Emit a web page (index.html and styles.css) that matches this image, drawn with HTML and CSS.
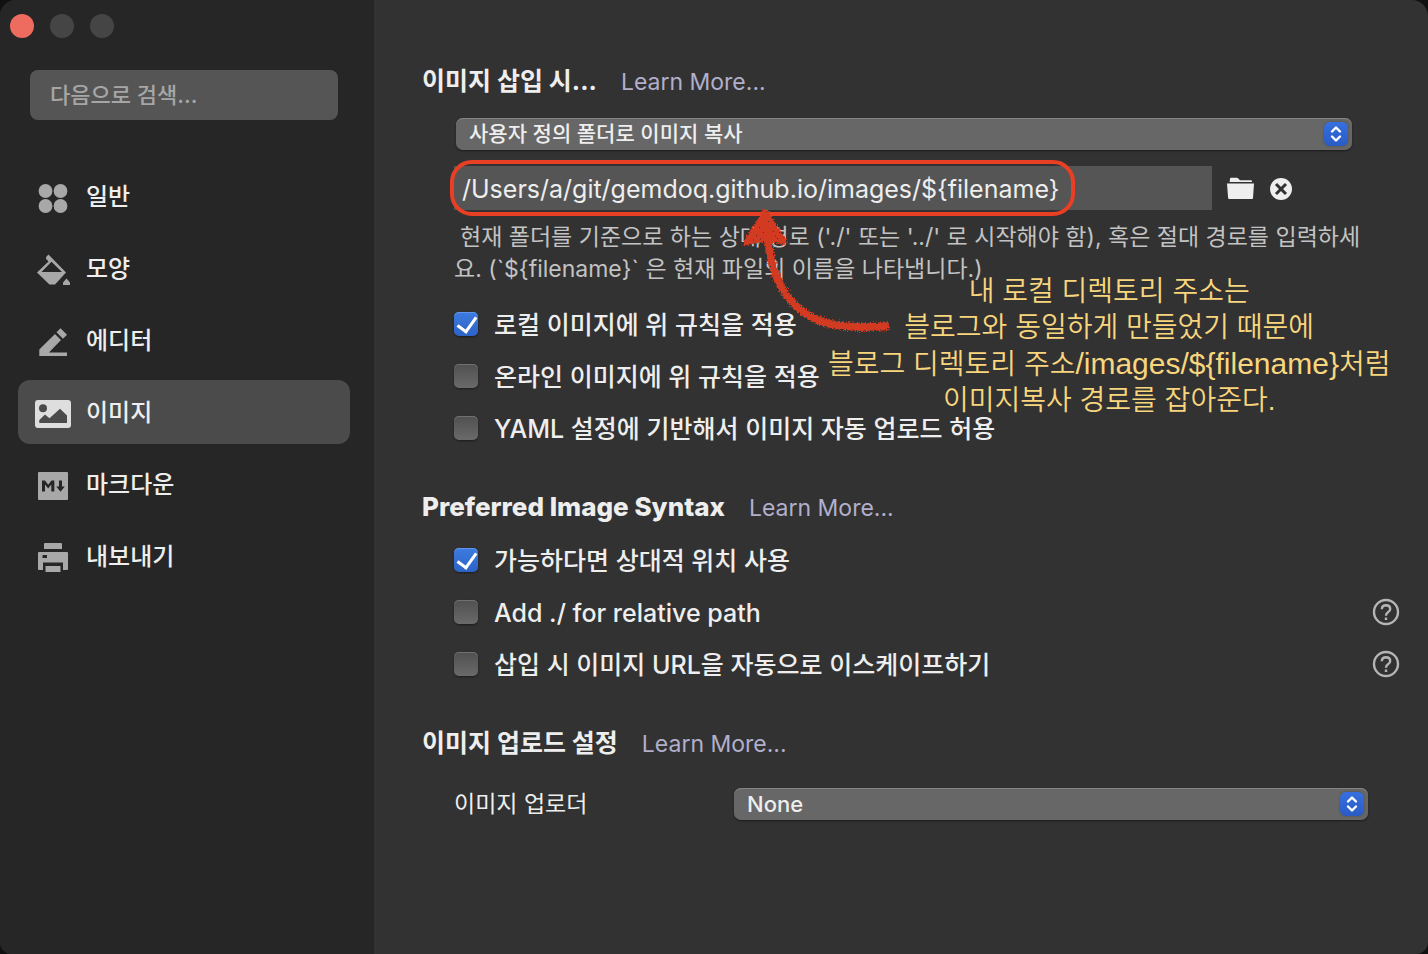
FILE: index.html
```html
<!DOCTYPE html>
<html lang="ko">
<head>
<meta charset="utf-8">
<title>이미지</title>
<link rel="stylesheet" href="styles.css">
</head>
<body>
<div class="window">
  <aside class="sidebar">
    <div class="lights">
      <button class="light light-close" aria-label="닫기"></button>
      <button class="light" aria-label="최소화"></button>
      <button class="light" aria-label="확대"></button>
    </div>
    <input class="search" type="search" placeholder="다음으로 검색..." aria-label="다음으로 검색">
    <nav class="nav">
      <a class="nav-item" href="#general">
        <svg class="nav-icon" viewBox="0 0 36 36"><circle cx="10.500" cy="11" r="6.900"/><circle cx="25.500" cy="11" r="6.900"/><circle cx="10.500" cy="26" r="6.900"/><circle cx="25.500" cy="26" r="6.900"/></svg>
        <span>일반</span>
      </a>
      <a class="nav-item" href="#appearance">
        <svg class="nav-icon" viewBox="0 0 36 36"><path fill-rule="evenodd" d="M11.500 4.500 13.500 2.500 31 20.500 20 32.500H14.500L2 20.500 13.500 9.500 10.800 6.500ZM15.500 10.800 6.500 20H27L16.500 9.800Z"/><path d="M31.500 26.500 35 30.500V33H28V30.500Z"/></svg>
        <span>모양</span>
      </a>
      <a class="nav-item" href="#editor">
        <svg class="nav-icon" viewBox="0 0 36 36"><path d="M25.500 4.200 32 10.700 28 14.800 21.500 8.300ZM20 10 26 16 14 28.500H32V32H4.300V25.500Z"/></svg>
        <span>에디터</span>
      </a>
      <a class="nav-item nav-item-active" href="#image" aria-current="page">
        <svg class="nav-icon" viewBox="0 0 36 36"><path fill-rule="evenodd" d="M3 4H33Q36 4 36 7V29Q36 32 33 32H3Q0 32 0 29V7Q0 4 3 4ZM8 8.200A4 4 0 1 0 8 16.200A4 4 0 1 0 8 8.200ZM4.300 27H32V19.500L25 12.800 14.500 22.300 10 18.500 4.300 24Z"/></svg>
        <span>이미지</span>
      </a>
      <a class="nav-item" href="#markdown">
        <svg class="nav-icon" viewBox="0 0 36 36"><path fill-rule="evenodd" d="M4 4H32Q33 4 33 5V31Q33 32 32 32H4Q3 32 3 31V5Q3 4 4 4ZM7 12.500V23.500H10V16.500L13.200 20.500 16.300 16.500V23.500H19.300V12.500H16.500L13.200 16.800 10 12.500ZM24 12.500V18.500H21.300L25.500 23.700 29.800 18.500H27V12.500Z"/></svg>
        <span>마크다운</span>
      </a>
      <a class="nav-item" href="#export">
        <svg class="nav-icon" viewBox="0 0 36 36"><path d="M10 3H26Q27 3 27 4V9H9V4Q9 3 10 3ZM10.500 26H25.500V32H10.500Z"/><path fill-rule="evenodd" d="M4 12H32Q33 12 33 13V29Q33 30 32 30H28V22.500H8V30H4Q3 30 3 29V13Q3 12 4 12ZM7.500 15V18H12V15Z"/></svg>
        <span>내보내기</span>
      </a>
    </nav>
  </aside>

  <main class="content">
    <section class="group">
      <header class="group-head">
        <h2>이미지 삽입 시...</h2>
        <a href="#learn-insert">Learn More...</a>
      </header>
      <div class="group-body insert">
        <div class="select insert-select">
          <select aria-label="이미지 삽입 시"><option>사용자 정의 폴더로 이미지 복사</option></select>
          <svg class="stepper" viewBox="0 0 24 24"><path d="M8 9.500 12 5.500 16 9.500M8 14.500 12 18.500 16 14.500"/></svg>
        </div>
        <div class="path-row">
          <input class="path" type="text" value="/Users/a/git/gemdoq.github.io/images/${filename}" aria-label="이미지 폴더 경로" spellcheck="false">
          <button class="icon-button" aria-label="폴더 선택">
            <svg width="27" height="24" viewBox="0 0 27 24"><path d="M3 2.500Q3.200 1.700 4 1.700H10Q11 1.700 12 3.200L13 4.200H24Q25 4.200 25 5.300V6H2.700ZM0 7.500H27L26 22Q26 23 25 23H2.200Q1.200 23 1.100 22Z"/></svg>
          </button>
          <button class="icon-button" aria-label="지우기">
            <svg width="24" height="24" viewBox="0 0 24 24"><circle cx="12" cy="13" r="11"/><path class="cross" d="M7 8 17 18M17 8 7 18"/></svg>
          </button>
          <div class="highlight"></div>
        </div>
        <p class="hint">현재 폴더를 기준으로 하는 상대 경로 ('./' 또는 '../' 로 시작해야 함), 혹은 절대 경로를 입력하세<br>요. (`${filename}` 은 현재 파일의 이름을 나타냅니다.)</p>
        <label class="check"><input type="checkbox" checked><span>로컬 이미지에 위 규칙을 적용</span></label>
        <label class="check"><input type="checkbox"><span>온라인 이미지에 위 규칙을 적용</span></label>
        <label class="check"><input type="checkbox"><span>YAML 설정에 기반해서 이미지 자동 업로드 허용</span></label>
        <svg class="arrow" viewBox="0 0 150 124" aria-hidden="true">
          <defs><filter id="crayon" x="-10%" y="-10%" width="120%" height="120%"><feTurbulence type="fractalNoise" baseFrequency="0.7" numOctaves="2" seed="4"/><feDisplacementMap in="SourceGraphic" scale="6" xChannelSelector="R" yChannelSelector="G"/></filter></defs>
          <g filter="url(#crayon)">
            <path class="arrow-head" d="M26 1Q29 1 31 7L48 33 46 37Q36 34 26 34 15 35 5 38L4 34 22 6Q23 1 26 1Z"/>
            <path class="arrow-line" d="M28 20C31 76 54 114 106 118Q125 120 150 118"/>
          </g>
          <path class="arrow-gap" d="M20 19 21 20M29 13 30 14M34 23 35 24M17 27 18 28M38 30 39 31M24 24 25 25M14 32 15 32M36 28 37 28M21 31 22 31"/>
        </svg>
        <p class="note">내 로컬 디렉토리 주소는<br>블로그와 동일하게 만들었기 때문에<br>블로그 디렉토리 주소<span class="note-latin">/images/${filename}</span>처럼<br>이미지복사 경로를 잡아준다.</p>
      </div>
    </section>

    <section class="group">
      <header class="group-head">
        <h2 class="latin-head">Preferred Image Syntax</h2>
        <a href="#learn-syntax">Learn More...</a>
      </header>
      <div class="group-body">
        <label class="check"><input type="checkbox" checked><span>가능하다면 상대적 위치 사용</span></label>
        <div class="check-row">
          <label class="check"><input type="checkbox"><span>Add ./ for relative path</span></label>
          <button class="help" aria-label="도움말"><svg viewBox="0 0 28 28"><circle cx="14" cy="14" r="12"/><path d="M9.800 11.200Q10 7.300 14 7.300 18.200 7.400 18.200 11 18.200 12.800 16 14.300 14 15.600 14 17.800"/><path d="M14 19.500V22"/></svg></button>
        </div>
        <div class="check-row">
          <label class="check"><input type="checkbox"><span>삽입 시 이미지 URL을 자동으로 이스케이프하기</span></label>
          <button class="help" aria-label="도움말"><svg viewBox="0 0 28 28"><circle cx="14" cy="14" r="12"/><path d="M9.800 11.200Q10 7.300 14 7.300 18.200 7.400 18.200 11 18.200 12.800 16 14.300 14 15.600 14 17.800"/><path d="M14 19.500V22"/></svg></button>
        </div>
      </div>
    </section>

    <section class="group">
      <header class="group-head">
        <h2>이미지 업로드 설정</h2>
        <a href="#learn-upload">Learn More...</a>
      </header>
      <div class="group-body uploader">
        <label class="uploader-label" for="uploader">이미지 업로더</label>
        <div class="select uploader-select">
          <select id="uploader"><option>None</option></select>
          <svg class="stepper" viewBox="0 0 24 24"><path d="M8 9.500 12 5.500 16 9.500M8 14.500 12 18.500 16 14.500"/></svg>
        </div>
      </div>
    </section>
  </main>
</div>
</body>
</html>
```
FILE: styles.css
```css
* { box-sizing: border-box; }
body {
  margin: 0;
  background: #111;
  color: #eee;
  font-family: Inter, "Noto Sans CJK KR", sans-serif;
  font-size: 24px;
  font-weight: 500;
  line-height: 32px;
}
h2, p { margin: 0; }
a { color: inherit; text-decoration: none; }
button { border: 0; padding: 0; background: none; }
input, select { font: inherit; color: inherit; }

.window {
  display: flex;
  min-height: 100vh;
  border-radius: 16px 16px 12px 12px;
  overflow: hidden;
  background: #323232;
}
.sidebar {
  flex: none;
  width: 374px;
  padding: 14px 24px 0 18px;
  background: #262626;
}
.lights { display: flex; gap: 16px; margin-left: -8px; }
.light { width: 24px; height: 24px; border-radius: 50%; background: #454545; }
.light-close { background: #ee6b5f; }
.search {
  display: block;
  width: 308px;
  height: 50px;
  margin: 32px 0 44px 12px;
  padding: 0 20px;
  border: 0;
  border-radius: 8px;
  background: #555;
  font-size: 22px;
}
.search::placeholder { color: #a6a6a6; opacity: 1; }
.nav { display: flex; flex-direction: column; gap: 8px; }
.nav-item {
  display: flex;
  align-items: center;
  gap: 15px;
  height: 64px;
  padding-left: 17px;
  border-radius: 12px;
}
.nav-item span, .check span { padding-top: 2px; }
.nav-item-active { background: #4b4b4b; }
.nav-icon { width: 36px; height: 36px; margin-top: 4px; fill: #a8a8a8; }
.nav-item-active .nav-icon { fill: #dedede; }

.content { flex: 1; min-width: 0; padding: 56px 28px 40px 48px; }
.group { margin-bottom: 28px; }
.group-head { display: flex; align-items: center; gap: 24px; height: 50px; }
.group-head h2 { font-size: 25px; font-weight: 700; }
.group-head .latin-head { font-size: 26px; font-weight: 800; }
.group-head a { padding-top: 2px; color: #b1afcb; font-size: 23px; font-weight: 400; }
.group-body { padding: 2px 0 0 32px; }

.insert { position: relative; padding-top: 12px; }
.select { position: relative; }
.select select {
  display: block;
  appearance: none;
  width: 100%;
  height: 32px;
  padding: 0 48px 0 13px;
  border: 0;
  border-radius: 7px;
  background: #676767;
  box-shadow: inset 0 1px #858585, 0 1px 2px #1c1c1c;
  font-size: 21px;
  line-height: 32px;
}
.stepper {
  position: absolute;
  top: 4px;
  right: 4px;
  width: 24px;
  height: 24px;
  border-radius: 6px;
  background: linear-gradient(#3670e0, #2a5bc4);
  box-shadow: 0 0 2px #444;
  fill: none;
  stroke: #fff;
  stroke-width: 2.4;
  stroke-linecap: round;
  stroke-linejoin: round;
  pointer-events: none;
}
.insert-select { margin: 0 48px 16px 2px; }
.path-row { position: relative; display: flex; align-items: center; gap: 15px; margin-right: 107px; }
.path {
  flex: 1;
  min-width: 0;
  height: 44px;
  padding: 2px 8px 0;
  border: 0;
  background: #555;
  font-size: 25px;
  font-weight: 400;
}
.icon-button { display: flex; fill: #eee; }
.cross { stroke: #323232; stroke-width: 3; }
.highlight {
  position: absolute;
  top: -6px;
  left: -4px;
  width: 625px;
  height: 56px;
  border: 4px solid #e94025;
  border-radius: 22px;
  pointer-events: none;
}
.hint {
  margin: 11px 0 13px;
  color: #c3c3c3;
  font-size: 23px;
  font-weight: 400;
  text-indent: 6px;
  white-space: nowrap;
}
.check { display: flex; align-items: center; gap: 16px; height: 52px; font-size: 25px; }
.check input {
  appearance: none;
  width: 24px;
  height: 24px;
  margin: 0;
  border-radius: 5px;
  background: linear-gradient(#505050, #6a6a6a);
  box-shadow: inset 0 1px #707070, 0 1px 2px #1c1c1c;
}
.check input:checked {
  background: linear-gradient(#3d7be2, #2c63c6);
  box-shadow: inset 0 1px #6194ea, 0 1px 2px #1c1c1c;
}
.check input:checked::after {
  content: "";
  display: block;
  width: 9px;
  height: 16px;
  margin: 1px 0 0 7px;
  border: solid #fff;
  border-width: 0 3px 3px 0;
  transform: rotate(36deg);
}
.check-row { display: flex; align-items: center; justify-content: space-between; }
.help { display: flex; }
.help svg { width: 28px; height: 28px; fill: none; stroke: #b5b5b5; stroke-width: 2.4; }

.arrow { position: absolute; top: 102px; left: 317px; width: 150px; height: 124px; overflow: visible; pointer-events: none; }
.arrow-head { fill: #d23a20; }
.arrow-line { fill: none; stroke: #d23a20; stroke-width: 8; }
.arrow-gap { fill: none; stroke: #4a3430; stroke-width: 1; }
.note {
  position: absolute;
  top: 168px;
  left: 406px;
  color: #f8d67e;
  font-family: "Liberation Sans", "Noto Sans CJK KR", sans-serif;
  font-size: 28px;
  font-weight: 350;
  line-height: 36px;
  text-align: center;
  white-space: nowrap;
  pointer-events: none;
}
.note-latin { font-size: 30px; }

.uploader { display: flex; align-items: center; padding-top: 20px; }
.uploader-label { width: 280px; font-size: 23px; font-weight: 400; }
.uploader-select { flex: 1; margin-right: 32px; }
.uploader-select select { font-size: 22px; }
```
